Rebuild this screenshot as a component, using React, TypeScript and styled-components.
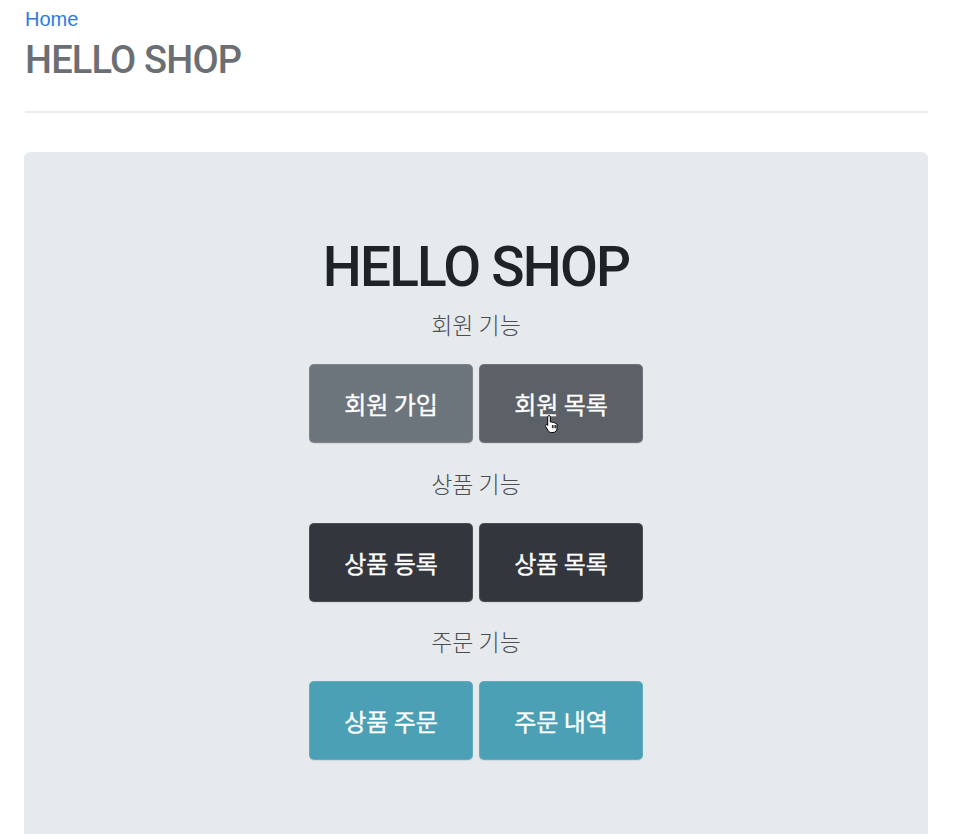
import React from 'react';
import styled, { createGlobalStyle } from 'styled-components';

type Variant = 'secondary' | 'secondaryHover' | 'dark' | 'info';

const colors: Record<Variant, string> = {
  secondary: '#6d757c',
  secondaryHover: '#5b6167',
  dark: '#33373d',
  info: '#4ba0b5',
};

const GlobalStyle = createGlobalStyle`
  html, body {
    margin: 0;
    padding: 0;
    background: #fff;
    font-family: Roboto, "Noto Sans CJK KR", Arial, sans-serif;
    overflow: hidden;
  }
`;

const Page = styled.div`
  width: 904px;
  padding: 4px 0 0 24px;
  box-sizing: content-box;
`;

const HomeLink = styled.a`
  display: block;
  padding-left: 1px;
  font-family: "Liberation Sans", sans-serif;
  font-size: 20px;
  line-height: 30px;
  color: #2c7be5;
  text-decoration: none;
`;

const HeaderTitle = styled.h3`
  margin: 3px 0 0;
  padding-left: 1px;
  font-size: 38px;
  font-weight: 500;
  line-height: 46px;
  color: #6b6e73;
  letter-spacing: -0.8px;
`;

const Divider = styled.hr`
  margin: 28px 0 0 1px;
  border: 0;
  border-top: 2px solid #ececec;
`;

const Jumbotron = styled.div`
  margin-top: 39px;
  height: 720px;
  background: #e7eaed;
  border-radius: 6px;
  padding-top: 82px;
  box-sizing: border-box;
  display: flex;
  flex-direction: column;
  align-items: center;
`;

const BigTitle = styled.h1`
  margin: 0;
  font-size: 55px;
  font-weight: 500;
  line-height: 66px;
  color: #1f2226;
  letter-spacing: -1.8px;
`;

const SectionLabel = styled.p<{ $first?: boolean }>`
  margin: ${(p) => (p.$first ? '6px' : '21.5px')} 0 0;
  font-family: "Noto Sans CJK KR", sans-serif;
  font-size: 23px;
  font-weight: 300;
  line-height: 36px;
  color: #4a4d51;
`;

const ButtonRow = styled.div`
  margin-top: 22px;
  display: flex;
  gap: 6px;
`;

const Button = styled.button<{ $variant: Variant }>`
  position: relative;
  width: 164px;
  height: 79px;
  border: 1px solid rgba(255, 255, 255, 0.12);
  border-radius: 5px;
  background: ${(p) => colors[p.$variant]};
  color: #fff;
  font-family: "Noto Sans CJK KR", sans-serif;
  font-size: 24px;
  font-weight: 400;
  -webkit-text-stroke: 0.35px #fff;
  box-shadow: 0 1px 1px rgba(0, 0, 0, 0.08);
  cursor: pointer;
`;

const Cursor = styled.svg`
  position: absolute;
  left: 64px;
  top: 49px;
  width: 16px;
  height: 20px;
`;

const HandCursor = () => (
  <Cursor viewBox="0 0 16 20">
    <path
      d="M5 1.5c.8 0 1.3.6 1.3 1.4v5.2l.6-.1c.6-.2 1.2 0 1.5.5.5-.3 1.2-.2 1.6.3.5-.2 1.2 0 1.5.6.8-.1 1.5.5 1.5 1.4v3.4c0 2.4-1.6 4.3-4 4.3H7.3c-1.3 0-2.3-.6-3-1.7L1.6 12.4c-.4-.6-.2-1.3.4-1.6.6-.3 1.2-.1 1.6.4l.1.2V2.9c0-.8.5-1.4 1.3-1.4z"
      fill="#fff"
      stroke="#000"
      strokeWidth="1"
    />
    <path d="M8.4 11v3.2M10 11v3.2M11.6 11v3.2" stroke="#000" strokeWidth="0.9" />
  </Cursor>
);

const sections: { label: string; buttons: { text: string; variant: Variant; cursor?: boolean }[] }[] = [
  {
    label: '회원 기능',
    buttons: [
      { text: '회원 가입', variant: 'secondary' },
      { text: '회원 목록', variant: 'secondaryHover', cursor: true },
    ],
  },
  {
    label: '상품 기능',
    buttons: [
      { text: '상품 등록', variant: 'dark' },
      { text: '상품 목록', variant: 'dark' },
    ],
  },
  {
    label: '주문 기능',
    buttons: [
      { text: '상품 주문', variant: 'info' },
      { text: '주문 내역', variant: 'info' },
    ],
  },
];

export default function App() {
  return (
    <>
      <GlobalStyle />
      <Page>
        <HomeLink href="#">Home</HomeLink>
        <HeaderTitle>HELLO SHOP</HeaderTitle>
        <Divider />
        <Jumbotron>
          <BigTitle>HELLO SHOP</BigTitle>
          {sections.map((s, i) => (
            <React.Fragment key={s.label}>
              <SectionLabel $first={i === 0}>{s.label}</SectionLabel>
              <ButtonRow>
                {s.buttons.map((b) => (
                  <Button key={b.text} $variant={b.variant}>
                    {b.text}
                    {b.cursor && <HandCursor />}
                  </Button>
                ))}
              </ButtonRow>
            </React.Fragment>
          ))}
        </Jumbotron>
      </Page>
    </>
  );
}
